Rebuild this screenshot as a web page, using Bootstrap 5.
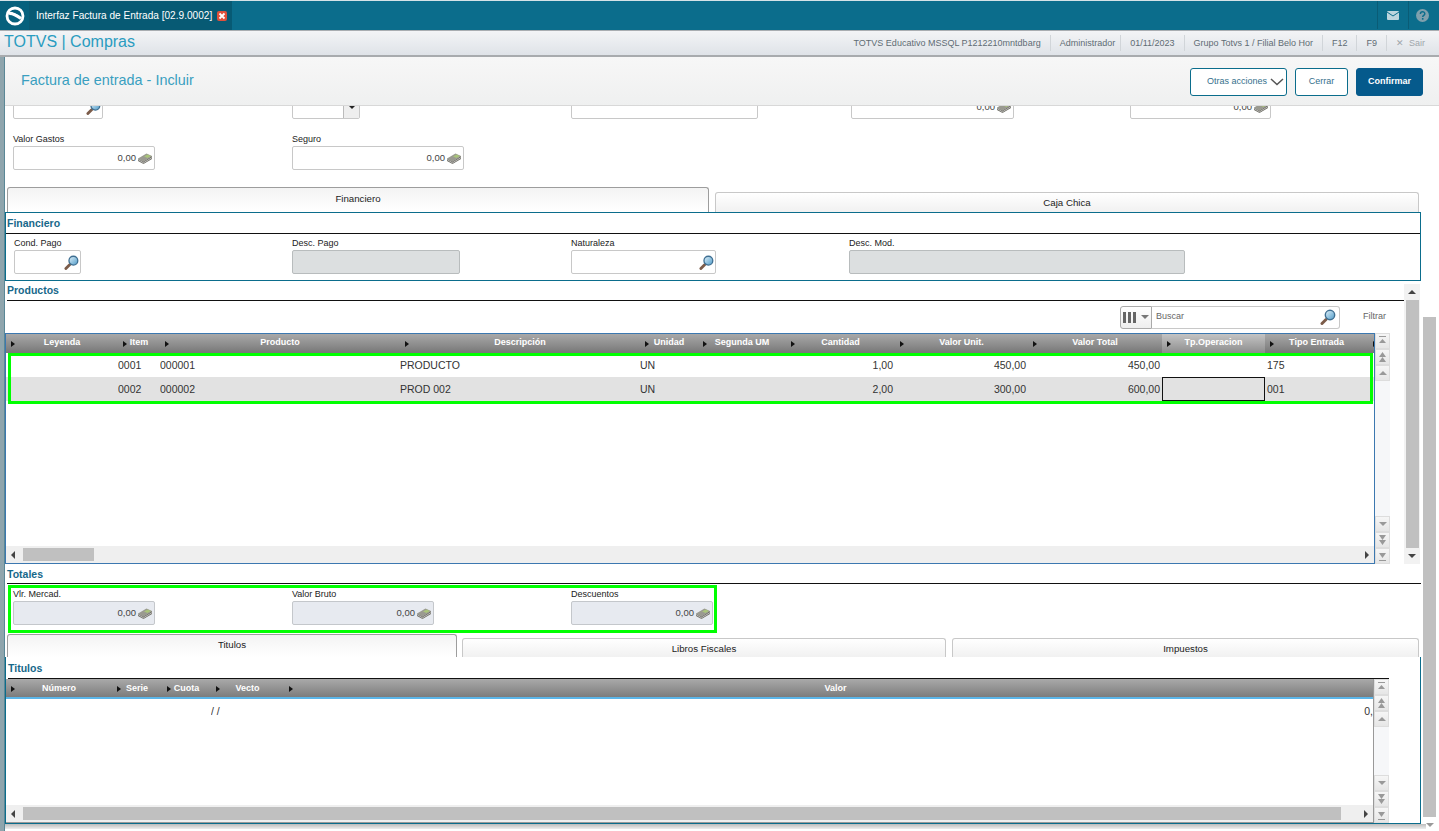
<!DOCTYPE html>
<html lang="es">
<head>
<meta charset="utf-8">
<title>Factura de entrada</title>
<link href="https://cdn.jsdelivr.net/npm/bootstrap@5.3.0/dist/css/bootstrap.min.css" rel="stylesheet">
<style>
html,body{height:831px;overflow:hidden}
body{font-family:"Liberation Sans",Arial,sans-serif;font-size:9px;color:#222;background:#fff;width:1439px}
.defs{position:absolute;width:0;height:0}
.topbar{height:30px;background:#0b6d8c;border-top:1px solid #d5e3e8}
.logo-cell{width:30px;background:#07617d;border-right:1px solid #0a5a73}
.tab-cell{width:202px;height:29px;background:#075a74;color:#fff;font-size:10.1px;padding-left:6px;gap:5px;white-space:nowrap}
.ticon{width:31px;height:28px;background:#0b6d8c;border-left:1px solid #0a5c76}
.appbar{height:27px;background:linear-gradient(#f3f4f6,#dfe3e8);border-top:1px solid #a9adb1;border-bottom:2px solid #a8abae;padding-left:4px;padding-right:6px}
.brand{font-size:16px;color:#2a9cc0;line-height:1;padding-bottom:3px}
.info{font-size:9px;color:#5f6c74;height:16px;padding:0 9px;border-left:1px solid #d1d5d9;line-height:16px;white-space:nowrap}
.info:first-child{border-left:0}
.info-a{padding-right:5px}
.sair{color:#a0a6ab;padding-right:8px}
.hdr{height:49px;background:linear-gradient(#f7f7f7,#eff0f0);border-bottom:1px solid #d8d8d8;padding-left:16px;padding-right:16px}
.hdr-title{font-size:14.4px;color:#3a9fc0}
.hdr-btns{margin-top:1px}
.tbtn{height:28px;font-size:9px;border-radius:3px;border:1px solid #0b6d8c;color:#35708c;background:#fff;padding:0;display:flex;align-items:center;justify-content:center}
.tbtn-a{width:97px;margin-right:8px;justify-content:flex-end;padding-right:2px;gap:3px}
.tbtn-b{width:53px;margin-right:8px}
.tbtn-c{width:67px;background:#055a8c;color:#fff;font-weight:700;border-color:#055a8c}
.wrap{height:725px;position:relative;overflow:hidden}
.strip{width:5px;background:#8fa5ad;border-right:1px solid #5a8796;flex:none}
.main{width:1418px;flex:none}
.fldrow{display:grid;grid-template-columns:279px 279px 280px 279px 279px;padding-left:8px}
.fldrow-g{height:64px;padding-top:14px}
.fldrow-f{grid-template-columns:278px 279px 278px 420px;padding-top:3px}
.fldrow-t{height:50px;padding-top:4px}
.lbl{height:13px;line-height:13px;color:#222;font-size:9px;white-space:nowrap}
.box{height:24px;border:1px solid #c8c8c8;border-radius:2px;background:#fff;display:flex;align-items:center;justify-content:flex-end;padding-right:1px;gap:1px;font-size:9.5px;color:#444}
.box.off{background:#dcdfe0;border-color:#b8bcbd}
.box.tot{background:#e7eaf0;border-color:#c4c7cb}
.cutrow{height:13px;overflow:hidden}
.cutrow .box{margin-top:-11px}
.cutrow .box.sel{padding-right:0;overflow:hidden}
.selbtn{width:16px;height:100%;border-left:1px solid #bbb;background:#eee;display:flex;justify-content:center;padding-top:10px}
.selbtn i{display:block;width:0;height:0;border-left:3px solid transparent;border-right:3px solid transparent;border-top:3px solid #222}
.w-90{width:90px}.w-142{width:142px}.w-68{width:68px}.w-172{width:172px}.w-67{width:67px}.w-168{width:168px}.w-145{width:145px}.w-336{width:336px}.w-163{width:163px}.w-141{width:141px}.w-187{width:187px}
.tabs{display:flex;padding-left:2px;align-items:flex-end}
.tabs-1{height:29px;gap:6px}
.tabs-2{height:23px}
.tb{border:1px solid #c8c8c8;border-bottom:0;border-radius:3px 3px 0 0;background:linear-gradient(#fff,#f1f1f1);text-align:center;font-size:9.7px;color:#222;height:20px;line-height:20px}
.tb.on{height:25px;line-height:21px;border-color:#9d9d9d;background:linear-gradient(#f3f3f3,#fff)}
.tabs-2 .tb{height:19px}
.tabs-2 .tb.on{height:23px;line-height:20px}
.t702{width:702px}.t704{width:704px}.t450{width:450px;margin-right:5px}.t484{width:484px;margin-right:6px}.t467{width:467px}
.panel{border:1px solid #0b6d8c;background:#fff;width:1416px}
.panel-1{height:69px}
.panel-2{height:167px;border-top:0}
.sec{color:#17688a;font-size:10.5px;font-weight:700;line-height:1;height:21px;padding-top:5px;border-bottom:1px solid #111}
.sec-1{padding-left:1px}
.sec-p{margin-left:2px;padding-left:0;height:20px;padding-top:4px}
.sec-t{width:1414px;padding-top:5px}
.sec-n{margin-left:2px;width:1381px;height:22px;padding-top:6px}
.prod{height:283px}
.prod-l{width:1399px;flex:none}
.tools{height:32px;padding-right:18px}
.grid-t{table-layout:fixed;border-collapse:collapse;width:100%}
.gh{background:linear-gradient(#a9a9a9,#777);color:#fff;font-weight:700;font-size:9px;height:19px;text-align:center;padding:0 0 1px;white-space:nowrap;position:relative;overflow:hidden}
.gh.sel{background:linear-gradient(#c4c4c4,#8d8d8d)}
.gh::before{content:"";position:absolute;left:5px;top:7px;border-left:4px solid #111;border-top:3px solid transparent;border-bottom:3px solid transparent}
.gh.pv{padding-left:14px}
.gb .gh{box-shadow:inset 0 -2px #5bb5e8;height:20px}
.c112{width:112px}.c42{width:42px}.c240{width:240px}.c58{width:58px}.c88{width:88px}.c109{width:109px}.c133{width:133px}.c134{width:134px}.c103{width:103px}
.c106{width:106px}.c50{width:50px}.c49{width:49px}.c73{width:73px}
.gc{height:24px;font-size:10.5px;color:#333;padding:1px 0 0;white-space:nowrap;overflow:hidden}
.gc.r{text-align:right;padding-right:2px}
.gc.p2{padding-left:2px}
.gc.e{padding-right:0}
.alt .gc{background:#e2e2e2}
.alt .gc.cur{box-shadow:inset 0 0 0 1px #111}
.gridbox{border:1px solid #3c78b0;height:231px;width:1370px;flex:none;display:flex;flex-direction:column;overflow:hidden}
.gridrow{height:231px}
.gridbox2{min-width:0;border-right:1px solid #999;border-bottom:1px solid #999}
.gridrow2{width:1383px;min-height:0}
.fill{flex:1 1 auto}
.hbar{height:17px;background:#efefef;display:flex;align-items:center;padding:0 5px;flex:none}
.hthumb{background:#c0c0c0;height:13px;margin-left:8px}
.th71{width:71px}.th1318{width:1318px}
.vbar{width:15px;background:#f6f7f9;display:flex;flex-direction:column;flex:none}
.vb{height:16px;border:1px solid #ddd;background:linear-gradient(#f6f6f6,#e6e6e6);display:flex;align-items:center;justify-content:center;flex:none}
.up,.dn{width:0;height:0;border-left:4px solid transparent;border-right:4px solid transparent}
.up{border-bottom:4px solid #999}
.dn{border-top:4px solid #999}
.lt{border-right:4px solid #444;border-top:4px solid transparent;border-bottom:4px solid transparent;width:0;height:0}
.rt{border-left:4px solid #444;border-top:4px solid transparent;border-bottom:4px solid transparent;width:0;height:0}
.sb{width:16px;background:#f2f2f2;display:flex;flex-direction:column;align-items:center;flex:none;height:280px;margin-top:3px}
.sb-th{width:13px;background:#c0c0c0;flex:1 1 auto}
.sb-a{height:16px;display:flex;align-items:center;justify-content:center;flex:none}
.up.k{border-bottom-color:#444}.dn.k{border-top-color:#444}
.pagebar{width:17px;display:flex;flex-direction:column;flex:none;padding-top:211px}
.pagebar .sb-th{width:13px;flex:none;height:500px}
.pagebar .sb-a{width:13px}
.flagbox{position:absolute;border:3px solid #0f0;pointer-events:none}
.flag1{left:8px;top:247px;width:1365px;height:51px}
.flag2{left:8px;top:479px;width:709px;height:48px}
.srch{width:188px;height:23px;border:1px solid #c8c8c8;border-left:0;border-radius:0 3px 3px 0;color:#666;padding:0 3px 0 4px}
.colbtn{width:32px;height:23px;border:1px solid #aaa;border-radius:3px 0 0 3px;background:linear-gradient(#fff,#eee);gap:5px}
.bars{width:13px;height:11px;background:linear-gradient(90deg,#666 0 3px,transparent 3px 5px,#666 5px 8px,transparent 8px 10px,#666 10px 13px)}
.caret-s{width:0;height:0;border-left:4px solid transparent;border-right:4px solid transparent;border-top:4px solid #777}
.filtrar{color:#666;margin-left:23px}
.shade{height:5px;background:linear-gradient(#bcbcbc,#eee);width:1421px}
</style>
</head>
<body>
<svg class="defs">
<defs>
<linearGradient id="gl" x1="0" y1="0" x2="1" y2="1"><stop offset="0" stop-color="#e4f3fb"/><stop offset="1" stop-color="#4d9ac8"/></linearGradient>
<symbol id="mag" viewBox="0 0 16 16"><path d="M2 14.5 6 10.5" stroke="#7c5c4a" stroke-width="3" stroke-linecap="round" fill="none"/><circle cx="10" cy="6" r="4.7" fill="url(#gl)" stroke="#3f6f92" stroke-width="1.4"/></symbol>
<symbol id="money" viewBox="0 0 16 12"><path d="M1 6.5 9.5 1.5 15 4 6.5 9.5Z" fill="#9a9a90"/><path d="M1 6.5V9L6.5 12 15 7V4L6.5 9.5Z" fill="#6c6b62"/><path d="M7 4.5 10.5 2.5 14 4 10.5 6Z" fill="#a9c47a"/><path d="M1 7.5 6.5 10.8 15 5.6" stroke="#ddd" stroke-width=".7" fill="none"/></symbol>
<symbol id="a-uu" viewBox="0 0 9 11"><path d="M1 0.5H8" stroke="#999"/><path d="M4.5 3 8 7H1Z" fill="#999"/></symbol>
<symbol id="a-u2" viewBox="0 0 9 11"><path d="M4.5 0 8 5H1ZM4.5 5 8 10H1Z" fill="#999"/></symbol>
<symbol id="a-d2" viewBox="0 0 9 11"><path d="M4.5 5 8 0H1ZM4.5 10 8 5H1Z" fill="#999"/></symbol>
<symbol id="a-dd" viewBox="0 0 9 11"><path d="M4.5 7 8 2H1Z" fill="#999"/><path d="M1 9.5H8" stroke="#999"/></symbol>
</defs>
</svg>

<div class="topbar d-flex align-items-stretch">
  <div class="logo-cell d-flex align-items-center justify-content-center">
    <svg width="22" height="22" viewBox="0 0 22 22"><circle cx="11" cy="11" r="8" fill="none" stroke="#fff" stroke-width="2.8"/><path d="M5 8.5C8 8 12 10 17 13.5" stroke="#fff" stroke-width="3.2" fill="none"/><path d="M8 5.8 16 9" stroke="#07617d" stroke-width="1.6"/></svg>
  </div>
  <div class="tab-cell d-flex align-items-center">
    <span>Interfaz Factura de Entrada [02.9.0002]</span>
    <svg width="10" height="10" viewBox="0 0 10 10"><rect width="10" height="10" rx="2" fill="#e0503a"/><path d="M2.5 2.5 7.5 7.5M7.5 2.5 2.5 7.5" stroke="#fff" stroke-width="1.8"/></svg>
  </div>
  <div class="ms-auto d-flex">
    <div class="ticon d-flex align-items-center justify-content-center">
      <svg width="12" height="9" viewBox="0 0 12 9"><rect width="12" height="9" rx="1" fill="#bcd5de"/><path d="M0 1 6 5 12 1" stroke="#0b6d8c" fill="none"/></svg>
    </div>
    <div class="ticon d-flex align-items-center justify-content-center pe-1">
      <svg width="13" height="13" viewBox="0 0 13 13"><circle cx="6.5" cy="6.5" r="6.5" fill="#7fa0ad"/><path d="M4.4 5c0-3 4.4-2.8 4.4-.3 0 1.6-2.1 1.6-2.1 3.2" stroke="#0b6d8c" stroke-width="1.5" fill="none"/><rect x="5.9" y="9" width="1.6" height="1.7" fill="#0b6d8c"/></svg>
    </div>
  </div>
</div>

<div class="appbar d-flex align-items-center">
  <div class="brand">TOTVS | Compras</div>
  <div class="ms-auto d-flex align-items-center">
    <span class="info">TOTVS Educativo MSSQL P1212210mntdbarg</span>
    <span class="info info-a">Administrador</span>
    <span class="info">01/11/2023</span>
    <span class="info">Grupo Totvs 1 / Filial Belo Hor</span>
    <span class="info">F12</span>
    <span class="info">F9</span>
    <span class="info sair">✕&nbsp; Sair</span>
  </div>
</div>

<div class="d-flex">
<div class="strip"></div>
<div class="flex-grow-1">
<div class="hdr d-flex align-items-center">
  <div class="hdr-title">Factura de entrada - Incluir</div>
  <div class="ms-auto d-flex hdr-btns">
    <button class="tbtn tbtn-a" type="button">Otras acciones
      <svg width="14" height="8" viewBox="0 0 14 8"><path d="M1 1 7 6.5 13 1" stroke="#555" stroke-width="1.5" fill="none"/></svg></button>
    <button class="tbtn tbtn-b" type="button">Cerrar</button>
    <button class="tbtn tbtn-c" type="button">Confirmar</button>
  </div>
</div>
</div>
</div>

<div class="wrap d-flex">
  <div class="strip"></div>
  <div class="main">
    <div class="fldrow cutrow">
      <div><div class="box w-90"><svg width="15" height="15"><use href="#mag"/></svg></div></div>
      <div><div class="box sel w-68"><span class="selbtn"><i></i></span></div></div>
      <div><div class="box w-187"></div></div>
      <div><div class="box w-163">0,00<svg width="16" height="12"><use href="#money"/></svg></div></div>
      <div><div class="box w-141">0,00<svg width="16" height="12"><use href="#money"/></svg></div></div>
    </div>
    <div class="fldrow fldrow-g">
      <div><div class="lbl">Valor Gastos</div><div class="box w-142">0,00<svg width="16" height="12"><use href="#money"/></svg></div></div>
      <div><div class="lbl">Seguro</div><div class="box w-172">0,00<svg width="16" height="12"><use href="#money"/></svg></div></div>
    </div>
    <div class="tabs tabs-1">
      <div class="tb on t702">Financiero</div>
      <div class="tb t704">Caja Chica</div>
    </div>
    <div class="panel panel-1">
      <div class="sec sec-1">Financiero</div>
      <div class="fldrow fldrow-f">
        <div><div class="lbl">Cond. Pago</div><div class="box w-67"><svg width="15" height="15"><use href="#mag"/></svg></div></div>
        <div><div class="lbl">Desc. Pago</div><div class="box off w-168"></div></div>
        <div><div class="lbl">Naturaleza</div><div class="box w-145"><svg width="15" height="15"><use href="#mag"/></svg></div></div>
        <div><div class="lbl">Desc. Mod.</div><div class="box off w-336"></div></div>
      </div>
    </div>
    <div class="d-flex prod">
      <div class="prod-l">
        <div class="sec sec-p">Productos</div>
        <div class="tools d-flex align-items-center justify-content-end">
          <div class="colbtn d-flex align-items-center justify-content-center"><span class="bars"></span><span class="caret-s"></span></div>
          <div class="srch d-flex align-items-center justify-content-between"><span>Buscar</span><svg width="16" height="16"><use href="#mag"/></svg></div>
          <span class="filtrar">Filtrar</span>
        </div>
        <div class="d-flex gridrow">
          <div class="gridbox">
            <table class="grid-t">
              <colgroup><col class="c112"><col class="c42"><col class="c240"><col class="c240"><col class="c58"><col class="c88"><col class="c109"><col class="c133"><col class="c134"><col class="c103"><col class="c103"><col></colgroup>
              <thead><tr>
                <th class="gh">Leyenda</th><th class="gh">Item</th><th class="gh">Producto</th><th class="gh">Descripción</th><th class="gh">Unidad</th><th class="gh">Segunda UM</th><th class="gh">Cantidad</th><th class="gh">Valor Unit.</th><th class="gh">Valor Total</th><th class="gh sel">Tp.Operacion</th><th class="gh">Tipo Entrada</th><th class="gh"></th>
              </tr></thead>
              <tbody>
                <tr><td class="gc"></td><td class="gc">0001</td><td class="gc">000001</td><td class="gc">PRODUCTO</td><td class="gc">UN</td><td class="gc"></td><td class="gc r">1,00</td><td class="gc r">450,00</td><td class="gc r">450,00</td><td class="gc"></td><td class="gc p2">175</td><td class="gc"></td></tr>
                <tr class="alt"><td class="gc"></td><td class="gc">0002</td><td class="gc">000002</td><td class="gc">PROD 002</td><td class="gc">UN</td><td class="gc"></td><td class="gc r">2,00</td><td class="gc r">300,00</td><td class="gc r">600,00</td><td class="gc cur"></td><td class="gc p2">001</td><td class="gc"></td></tr>
              </tbody>
            </table>
            <div class="fill"></div>
            <div class="hbar"><span class="lt"></span><div class="hthumb th71"></div><span class="rt ms-auto"></span></div>
          </div>
          <div class="vbar">
            <div class="vb"><svg width="9" height="11"><use href="#a-uu"/></svg></div><div class="vb"><svg width="9" height="11"><use href="#a-u2"/></svg></div><div class="vb"><span class="up"></span></div>
            <div class="fill"></div>
            <div class="vb"><span class="dn"></span></div><div class="vb"><svg width="9" height="11"><use href="#a-d2"/></svg></div><div class="vb"><svg width="9" height="11"><use href="#a-dd"/></svg></div>
          </div>
        </div>
      </div>
      <div class="sb">
        <div class="sb-a"><span class="up k"></span></div><div class="sb-th"></div><div class="sb-a"><span class="dn k"></span></div>
      </div>
    </div>
    <div class="sec sec-p sec-t">Totales</div>
    <div class="fldrow fldrow-t">
      <div><div class="lbl">Vlr. Mercad.</div><div class="box tot w-142">0,00<svg width="16" height="12"><use href="#money"/></svg></div></div>
      <div><div class="lbl">Valor Bruto</div><div class="box tot w-142">0,00<svg width="16" height="12"><use href="#money"/></svg></div></div>
      <div><div class="lbl">Descuentos</div><div class="box tot w-142">0,00<svg width="16" height="12"><use href="#money"/></svg></div></div>
    </div>
    <div class="tabs tabs-2">
      <div class="tb on t450">Titulos</div>
      <div class="tb t484">Libros Fiscales</div>
      <div class="tb t467">Impuestos</div>
    </div>
    <div class="panel panel-2 d-flex flex-column">
      <div class="sec sec-n">Titulos</div>
      <div class="d-flex flex-grow-1 gridrow2">
        <div class="d-flex flex-column flex-grow-1 gridbox2">
          <table class="grid-t gb">
            <colgroup><col class="c106"><col class="c50"><col class="c49"><col class="c73"><col></colgroup>
            <thead><tr>
              <th class="gh">Número</th><th class="gh">Serie</th><th class="gh">Cuota</th><th class="gh">Vecto</th><th class="gh pv">Valor</th>
            </tr></thead>
            <tbody><tr><td class="gc"></td><td class="gc"></td><td class="gc"></td><td class="gc">/ /</td><td class="gc r e">0,</td></tr></tbody>
          </table>
          <div class="fill"></div>
          <div class="hbar"><span class="lt"></span><div class="hthumb th1318"></div><span class="rt ms-auto"></span></div>
        </div>
        <div class="vbar">
          <div class="vb"><svg width="9" height="11"><use href="#a-uu"/></svg></div><div class="vb"><svg width="9" height="11"><use href="#a-u2"/></svg></div><div class="vb"><span class="up"></span></div>
          <div class="fill"></div>
          <div class="vb"><span class="dn"></span></div><div class="vb"><svg width="9" height="11"><use href="#a-d2"/></svg></div><div class="vb"><svg width="9" height="11"><use href="#a-dd"/></svg></div>
        </div>
      </div>
    </div>
    <div class="shade"></div>
  </div>
  <div class="pagebar"><div class="sb-th"></div><div class="sb-a"><span class="dn"></span></div></div>
  <div class="flagbox flag1"></div>
  <div class="flagbox flag2"></div>
</div>
</body>
</html>
